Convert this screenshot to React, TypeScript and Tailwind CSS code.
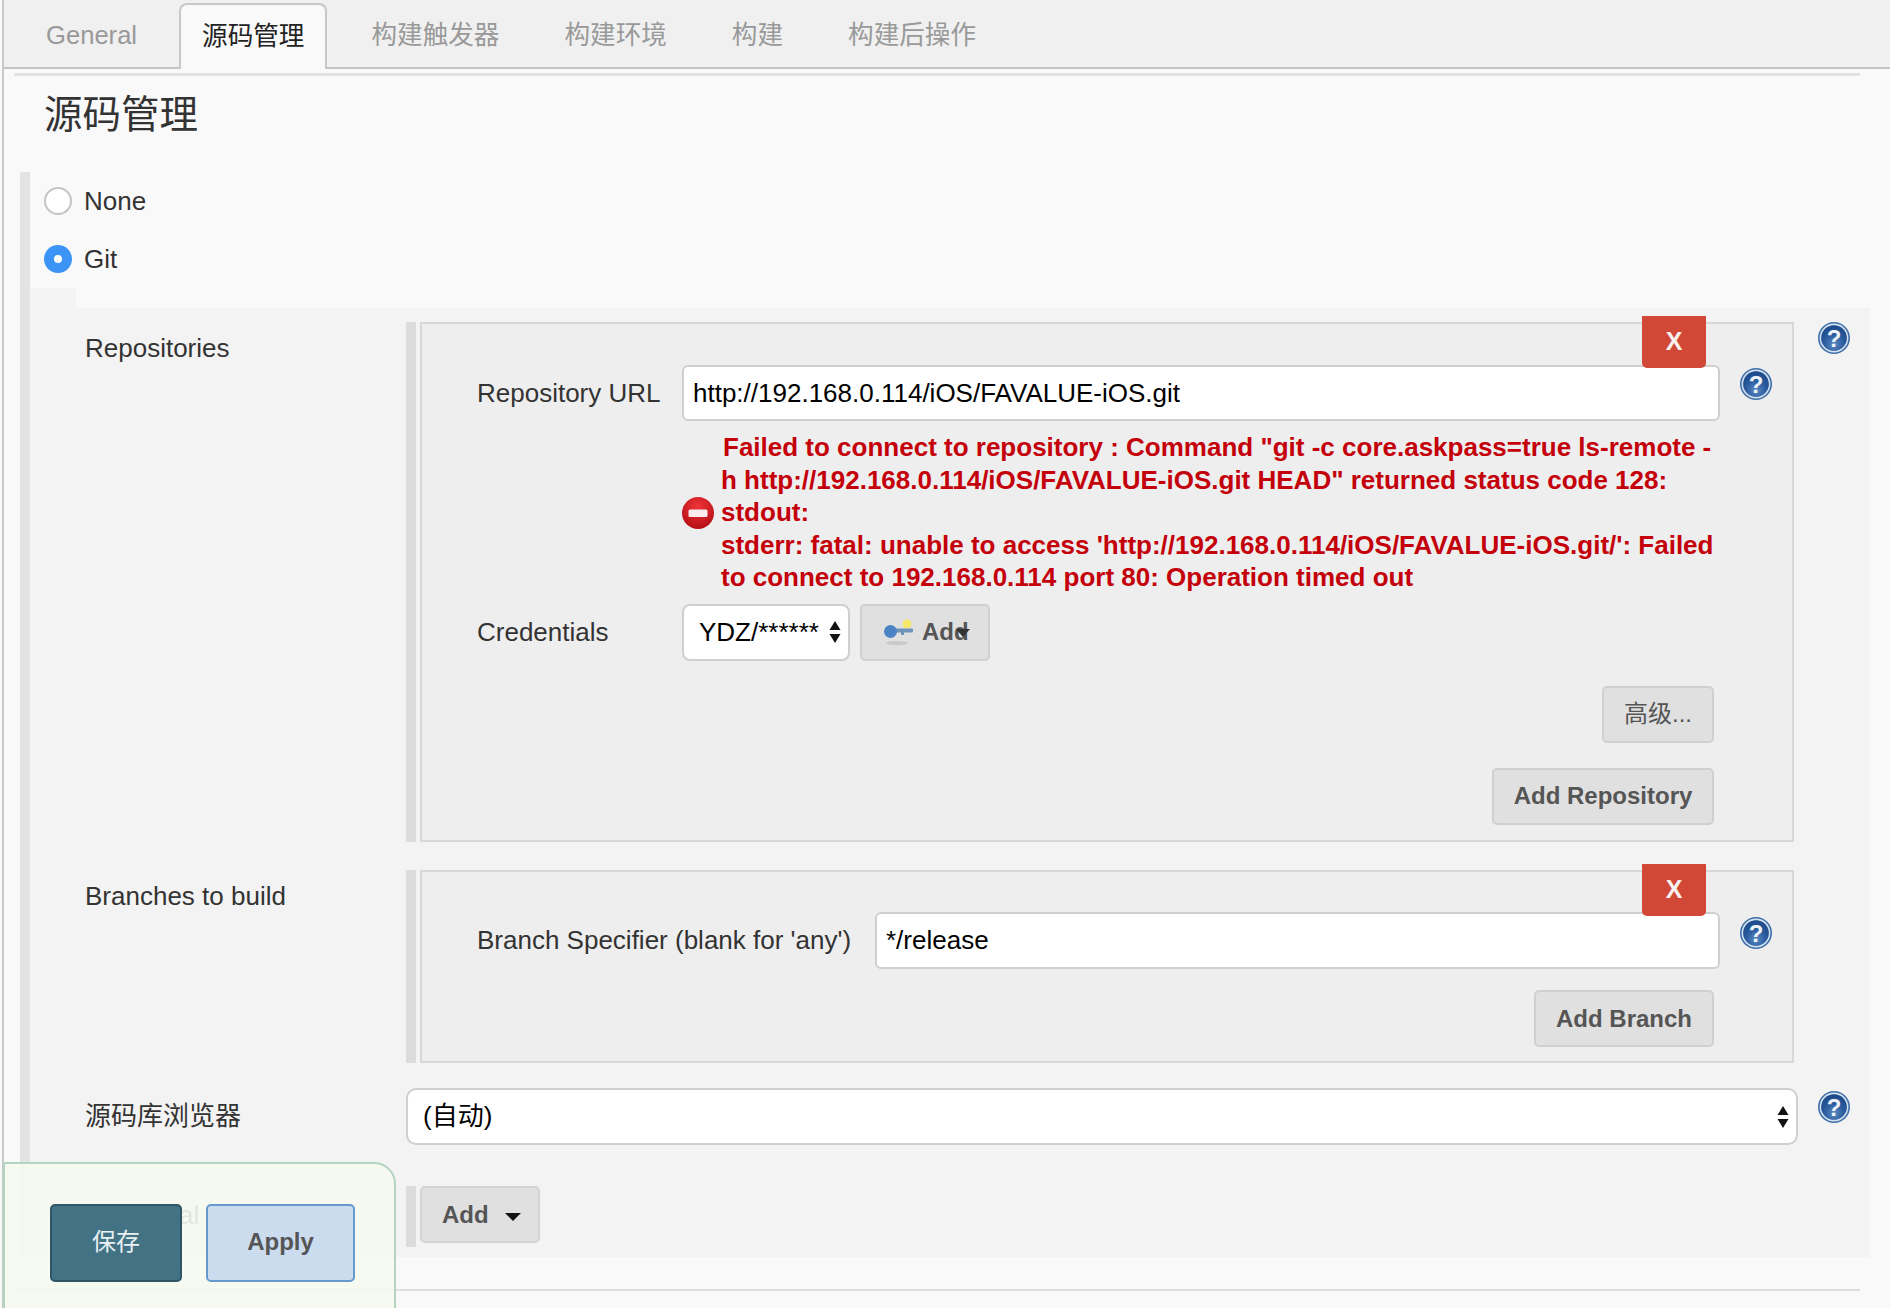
const SANS = "font-['Liberation_Sans','Noto_Sans_CJK_SC',sans-serif]";

const TABS = ["General", "源码管理", "构建触发器", "构建环境", "构建", "构建后操作"];

function HelpIcon() {
  return (
    <svg width="32" height="32" viewBox="0 0 32 32" className="shrink-0">
      <defs>
        <radialGradient id="helpBg" cx="50%" cy="75%" r="70%">
          <stop offset="0%" stopColor="#5c8ac2" />
          <stop offset="55%" stopColor="#2b5c9e" />
          <stop offset="100%" stopColor="#1d4a8a" />
        </radialGradient>
      </defs>
      <circle cx="16" cy="16" r="16" fill="#3f6fa9" />
      <circle cx="16" cy="16" r="13.6" fill="none" stroke="#d3e0ee" strokeWidth="1.6" />
      <circle cx="16" cy="16" r="12.6" fill="url(#helpBg)" />
      <text x="16" y="24.5" textAnchor="middle" fontSize="24" fontWeight="700" fill="#eef3f8" fontFamily="Liberation Sans, sans-serif">?</text>
    </svg>
  );
}

function ErrorIcon() {
  return (
    <svg width="32" height="32" viewBox="0 0 32 32" className="shrink-0">
      <defs>
        <radialGradient id="errBg" cx="50%" cy="30%" r="75%">
          <stop offset="0%" stopColor="#f0353a" />
          <stop offset="100%" stopColor="#b00c12" />
        </radialGradient>
      </defs>
      <circle cx="16" cy="16" r="16" fill="url(#errBg)" />
      <rect x="6.5" y="12.5" width="19" height="7.5" rx="1.5" fill="#fbeeee" />
    </svg>
  );
}

function KeyIcon() {
  return (
    <svg width="32" height="32" viewBox="0 0 32 32" className="shrink-0">
      <ellipse cx="14" cy="27" rx="11" ry="2" fill="#c9c9c9" />
      <circle cx="24" cy="8" r="4.5" fill="#f5e76a" />
      <rect x="8" y="12.5" width="22" height="4" rx="1" fill="#6d93bb" />
      <circle cx="7.5" cy="15.5" r="6.5" fill="#4c83c4" />
      <rect x="18" y="16" width="3" height="3" fill="#6d93bb" />
    </svg>
  );
}

function UpDown() {
  return (
    <svg width="12" height="24" viewBox="0 0 12 24" className="pointer-events-none absolute right-[9px] top-1/2 -translate-y-1/2">
      <path d="M6 1 L11.5 10 H0.5 Z" fill="#111" />
      <path d="M6 23 L11.5 14 H0.5 Z" fill="#111" />
    </svg>
  );
}

function Btn({ children, className = "" }: { children: React.ReactNode; className?: string }) {
  return (
    <button className={`h-[57px] rounded-[5px] border-2 border-[#d0d0d0] bg-[#e0e0e0] text-[24px] font-bold text-[#555] ${className}`}>
      {children}
    </button>
  );
}

function CloseBtn() {
  return (
    <button className="absolute right-[86px] top-[-8px] z-10 flex h-[52px] w-[64px] items-center justify-center rounded-b-[5px] bg-[#d14836] text-[25px] font-bold text-[#f7f1ef]">
      X
    </button>
  );
}

function Radio({ checked, label }: { checked?: boolean; label: string }) {
  return (
    <div className="flex h-[28px] items-center gap-[12px]">
      {checked ? (
        <span className="flex h-[28px] w-[28px] items-center justify-center rounded-full bg-[#3b94f6]">
          <span className="h-[8px] w-[8px] rounded-full bg-white" />
        </span>
      ) : (
        <span className="h-[28px] w-[28px] rounded-full border-2 border-[#c4c4c4] bg-white" />
      )}
      <span className="text-[26px] text-[#333]">{label}</span>
    </div>
  );
}

export default function App() {
  return (
    <div className={`${SANS} relative h-[1308px] w-[1890px] overflow-hidden bg-[#f9f9f9] pl-[2px] text-[#333]`}>
      <div className="h-full border-l-2 border-[#c9c9c9]">
        {/* tabs */}
        <div className="flex h-[69px] gap-[23px] border-b-2 border-[#c4c4c4] bg-[#f0f0f0] pl-[21px]">
          {TABS.map((t, i) => (
            <div
              key={t}
              className={`mt-[3px] flex h-[66px] items-center pb-[2px] text-[25.6px] ${
                i === 1 ? "rounded-t-[8px] border-2 border-b-0 border-[#c8c8c8] bg-[#f9f9f9] px-[21px] text-[#222]" : "px-[21px] text-[#999]"
              } ${i === 0 ? "-mr-[2px]" : ""}`}
            >
              {t}
            </div>
          ))}
        </div>
        <div className="ml-[10px] mt-[4px] h-[3px] w-[1846px] bg-[#e2e2e2]" />

        <h1 className="flex h-[78px] items-center pl-[40px] text-[38.5px] font-normal text-[#333]">源码管理</h1>

        <div className="ml-[16px] mt-[18px] h-[1085px] border-l-[10px] border-[#e3e3e3]">
          <div className="flex flex-col gap-[30px] pl-[14px] pt-[15px]">
            <Radio label="None" />
            <Radio checked label="Git" />
          </div>
          <div className="mt-[15px] h-[20px] w-[46px] bg-[#f3f3f3]" />

          <div className="h-[949px] w-[1840px] bg-[#f3f3f3] pt-[14px]">
            {/* Repositories */}
            <div className="flex">
              <div className="w-[376px] pl-[55px] pt-[7px] text-[26px]">Repositories</div>
              <div className="h-[520px] w-[10px] bg-[#dcdcdc]" />
              <div className="relative ml-[4px] h-[520px] w-[1374px] border-2 border-[#d8d8d8] bg-[#eeeeee]">
                <CloseBtn />
                <div className="flex pl-[55px] pt-[41px]">
                  <label className="flex h-[56px] w-[205px] items-center text-[26px]">Repository URL</label>
                  <input
                    readOnly
                    value="http://192.168.0.114/iOS/FAVALUE-iOS.git"
                    className="h-[56px] w-[1038px] rounded-[6px] border-2 border-[#cfcfcf] bg-white px-[9px] text-[26px] text-black outline-none"
                  />
                  <div className="ml-[20px] mt-[3px]">
                    <HelpIcon />
                  </div>
                </div>
                <div className="ml-[260px] mt-[10px] flex items-center gap-[7px]">
                  <div className="mt-[2px]">
                    <ErrorIcon />
                  </div>
                  <div className="whitespace-nowrap text-[26px] font-bold leading-[32.5px] text-[#c4000a]">
                    <span className="pl-[2px]">Failed to connect to repository : Command "git -c core.askpass=true ls-remote -</span>
                    <br />
                    h http://192.168.0.114/iOS/FAVALUE-iOS.git HEAD" returned status code 128:
                    <br />
                    stdout:
                    <br />
                    stderr: fatal: unable to access 'http://192.168.0.114/iOS/FAVALUE-iOS.git/': Failed
                    <br />
                    to connect to 192.168.0.114 port 80: Operation timed out
                  </div>
                </div>
                <div className="mt-[10px] flex pl-[55px]">
                  <label className="flex h-[57px] w-[205px] items-center text-[26px]">Credentials</label>
                  <div className="relative h-[57px] w-[168px]">
                    <select className="h-full w-full appearance-none rounded-[8px] border-2 border-[#cfcfcf] bg-white pl-[15px] text-[26px] text-black outline-none">
                      <option>YDZ/******</option>
                    </select>
                    <UpDown />
                  </div>
                  <div className="relative ml-[10px] flex h-[57px] w-[130px] items-center gap-[7px] rounded-[5px] border-2 border-[#d0d0d0] bg-[#e0e0e0] pl-[21px] text-[24px] font-bold text-[#555]">
                    <KeyIcon />
                    Add
                    <span className="absolute left-[94px] top-[23px] h-0 w-0 border-x-[7px] border-t-[8px] border-x-transparent border-t-[#333]" />
                  </div>
                </div>
                <div className="flex flex-col items-end pr-[78px]">
                  <Btn className="mt-[25px] w-[112px] !font-normal">高级...</Btn>
                  <Btn className="mt-[25px] w-[222px]">Add Repository</Btn>
                </div>
              </div>
              <div className="ml-[24px]">
                <HelpIcon />
              </div>
            </div>

            {/* Branches */}
            <div className="mt-[28px] flex">
              <div className="w-[376px] pl-[55px] pt-[7px] text-[26px]">Branches to build</div>
              <div className="h-[193px] w-[10px] bg-[#dcdcdc]" />
              <div className="relative ml-[4px] h-[193px] w-[1374px] border-2 border-[#d8d8d8] bg-[#eeeeee]">
                <CloseBtn />
                <div className="flex pl-[55px] pt-[40px]">
                  <label className="flex h-[57px] w-[398px] items-center whitespace-nowrap text-[26px]">Branch Specifier (blank for 'any')</label>
                  <input
                    readOnly
                    value="*/release"
                    className="h-[57px] w-[845px] rounded-[6px] border-2 border-[#cfcfcf] bg-white px-[9px] text-[26px] text-black outline-none"
                  />
                  <div className="ml-[20px] mt-[5px]">
                    <HelpIcon />
                  </div>
                </div>
                <div className="mt-[21px] flex justify-end pr-[78px]">
                  <Btn className="w-[180px]">Add Branch</Btn>
                </div>
              </div>
            </div>

            {/* repo browser */}
            <div className="mt-[25px] flex">
              <div className="flex h-[57px] w-[376px] items-center pl-[55px] text-[26px]">源码库浏览器</div>
              <div className="relative h-[57px] w-[1392px]">
                <select className="h-full w-full appearance-none rounded-[10px] border-2 border-[#cfcfcf] bg-white pl-[15px] text-[26px] text-black outline-none">
                  <option>(自动)</option>
                </select>
                <UpDown />
              </div>
              <div className="ml-[20px] mt-[3px]">
                <HelpIcon />
              </div>
            </div>

            {/* additional */}
            <div className="mt-[41px] flex">
              <div className="w-[376px] whitespace-nowrap pl-[55px] pt-[10px] text-[26px] text-[#333]">Additional Behaviours</div>
              <div className="h-[61px] w-[10px] bg-[#dcdcdc]" />
              <button className="relative ml-[4px] h-[57px] w-[120px] rounded-[5px] border-2 border-[#d4d4d4] bg-[#e0e0e0] pl-[20px] text-left text-[24px] font-bold text-[#555]">
                Add
                <span className="absolute left-[83px] top-[25px] h-0 w-0 border-x-[8px] border-t-[8px] border-x-transparent border-t-[#111]" />
              </button>
            </div>
          </div>
        </div>

        <div className="ml-[9px] mt-[32px] h-[2px] w-[1847px] bg-[#dedede]" />
      </div>

      {/* floating save bar */}
      <div className="absolute bottom-[-4px] left-[3px] z-20 flex h-[150px] w-[393px] items-start gap-[24px] rounded-tr-[22px] border-2 border-[#b4d4c2] bg-[#f5f9f0]/90 pl-[45px] pt-[40px]">
        <button className="h-[78px] w-[132px] rounded-[5px] border-2 border-[#2f5566] bg-[#447285] pb-[2px] text-[24px] text-[#e8f0f3]">保存</button>
        <button className="h-[78px] w-[149px] rounded-[5px] border-2 border-[#6699cc] bg-[#cbdcee] pb-[2px] text-[24px] font-bold text-[#555]">Apply</button>
      </div>
    </div>
  );
}
